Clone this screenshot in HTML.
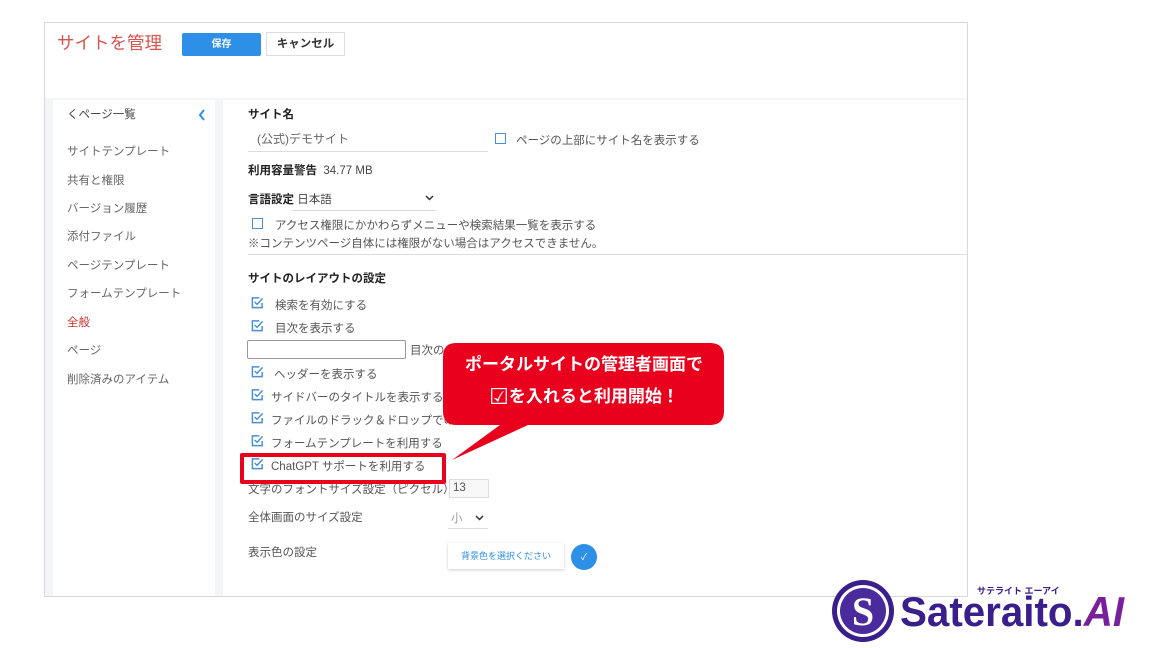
<!DOCTYPE html>
<html><head><meta charset="utf-8"><style>
*{margin:0;padding:0;box-sizing:border-box}
body{width:1149px;height:648px;background:#fff;position:relative;overflow:hidden;font-family:"Liberation Sans","Noto Sans CJK JP",sans-serif;color:#333}
.a{position:absolute;white-space:nowrap}
.frame{left:44px;top:22px;width:924px;height:575px;border:1px solid #d8d8d8;background:#f4f5f8}
.hdr{left:45px;top:23px;width:922px;height:75px;background:#fff}
.side{left:53px;top:100px;width:162px;height:496px;background:#fff}
.main{left:223px;top:100px;width:744px;height:496px;background:#fff}
.nav{left:67px;font-size:11.5px;color:#666}
.lbl{font-size:11.5px;color:#444}
.cb{width:11px;height:11px;border:1.5px solid #4a90d9}
.ck{font-size:11.5px;color:#555}
</style></head><body>
<svg width="0" height="0" style="position:absolute"><defs><symbol id="c" viewBox="0 0 14 14"><path d="M12 7.5V12.5H1.5V2H9" fill="none" stroke="#4a90d9" stroke-width="1.6"/><path d="M4 6.5L6.5 9L12.5 2.5" fill="none" stroke="#4a90d9" stroke-width="1.6"/></symbol></defs></svg>
<div class="a frame"></div>
<div class="a hdr"></div>
<div class="a" style="left:57px;top:30px;font-size:17.5px;color:#d9534f">サイトを管理</div>
<div class="a" style="left:182px;top:33px;width:79px;height:23px;background:#2d8fe6;border-radius:2px;color:#fff;font-size:10px;font-weight:bold;text-align:center;line-height:23px">保存</div>
<div class="a" style="left:266px;top:32px;width:79px;height:24px;border:1px solid #ddd;background:#fff;font-size:11.5px;font-weight:bold;text-align:center;line-height:22px;color:#333">キャンセル</div>
<div class="a side"></div>
<div class="a main"></div>
<div class="a nav" style="top:106px;color:#444">くページ一覧</div>
<svg class="a" style="left:198px;top:109px" width="8" height="12"><path d="M6 1L2 6L6 11" fill="none" stroke="#2d8fe6" stroke-width="2"/></svg>
<div class="a nav" style="top:143px">サイトテンプレート</div>
<div class="a nav" style="top:172px">共有と権限</div>
<div class="a nav" style="top:200px">バージョン履歴</div>
<div class="a nav" style="top:228px">添付ファイル</div>
<div class="a nav" style="top:257px">ページテンプレート</div>
<div class="a nav" style="top:285px">フォームテンプレート</div>
<div class="a nav" style="top:314px;color:#c9302c">全般</div>
<div class="a nav" style="top:342px">ページ</div>
<div class="a nav" style="top:371px">削除済みのアイテム</div>

<div class="a lbl" style="left:248px;top:106px;font-weight:bold;color:#222">サイト名</div>
<div class="a" style="left:257px;top:130px;font-size:12px;color:#666">(公式)デモサイト</div>
<div class="a" style="left:248px;top:151px;width:240px;height:1px;background:#ddd"></div>
<div class="a cb" style="left:495px;top:133px"></div>
<div class="a ck" style="left:516px;top:132px">ページの上部にサイト名を表示する</div>
<div class="a lbl" style="left:248px;top:162px"><b style="color:#222">利用容量警告</b>&nbsp; 34.77 MB</div>
<div class="a lbl" style="left:248px;top:191px"><b style="color:#222">言語設定</b> 日本語</div>
<svg class="a" style="left:425px;top:195px" width="9" height="6"><path d="M1 1L4.5 4.5L8 1" fill="none" stroke="#333" stroke-width="1.5"/></svg>
<div class="a" style="left:292px;top:210px;width:144px;height:1px;background:#ddd"></div>
<div class="a cb" style="left:252px;top:218px"></div>
<div class="a ck" style="left:275px;top:217px">アクセス権限にかかわらずメニューや検索結果一覧を表示する</div>
<div class="a ck" style="left:248px;top:235px">※コンテンツページ自体には権限がない場合はアクセスできません。</div>
<div class="a" style="left:248px;top:254px;width:719px;height:1px;background:#ddd"></div>
<div class="a lbl" style="left:248px;top:270px;font-weight:bold;color:#222">サイトのレイアウトの設定</div>

<svg class="a" style="left:251px;top:296px" width="13" height="13"><use href="#c"/></svg>
<div class="a ck" style="left:275px;top:297px">検索を有効にする</div>
<svg class="a" style="left:251px;top:319px" width="13" height="13"><use href="#c"/></svg>
<div class="a ck" style="left:275px;top:320px">目次を表示する</div>
<div class="a" style="left:247px;top:340px;width:159px;height:19px;border:1px solid #999;border-radius:2px"></div>
<div class="a ck" style="left:410px;top:342px">目次の</div>
<svg class="a" style="left:251px;top:365px" width="13" height="13"><use href="#c"/></svg>
<div class="a ck" style="left:274px;top:366px">ヘッダーを表示する</div>
<svg class="a" style="left:251px;top:388px" width="13" height="13"><use href="#c"/></svg>
<div class="a ck" style="left:271px;top:389px">サイドバーのタイトルを表示する</div>
<svg class="a" style="left:251px;top:411px" width="13" height="13"><use href="#c"/></svg>
<div class="a ck" style="left:271px;top:412px">ファイルのドラック＆ドロップでの</div>
<svg class="a" style="left:251px;top:434px" width="13" height="13"><use href="#c"/></svg>
<div class="a ck" style="left:271px;top:435px">フォームテンプレートを利用する</div>
<svg class="a" style="left:251px;top:457px" width="13" height="13"><use href="#c"/></svg>
<div class="a ck" style="left:271px;top:458px">ChatGPT サポートを利用する</div>
<div class="a ck" style="left:248px;top:481px">文字のフォントサイズ設定（ピクセル）</div>
<div class="a" style="left:449px;top:479px;width:40px;height:19px;border:1px solid #ddd;background:#f8f8f8;font-size:11.5px;color:#555;padding:2px 3px">13</div>
<div class="a ck" style="left:248px;top:509px">全体画面のサイズ設定</div>
<div class="a ck" style="left:451px;top:510px;color:#999">小</div>
<svg class="a" style="left:475px;top:515px" width="9" height="6"><path d="M1 1L4.5 4.5L8 1" fill="none" stroke="#333" stroke-width="1.5"/></svg>
<div class="a" style="left:448px;top:528px;width:40px;height:1px;background:#ddd"></div>
<div class="a ck" style="left:248px;top:544px">表示色の設定</div>
<div class="a" style="left:448px;top:543px;width:116px;height:26px;background:#fff;box-shadow:0 1px 3px rgba(0,0,0,.2);font-size:9px;color:#2d8fe6;text-align:center;line-height:26px">背景色を選択ください</div>
<div class="a" style="left:571px;top:544px;width:26px;height:26px;border-radius:50%;background:#2d8fe6;color:#fff;font-size:9px;text-align:center;line-height:26px">✓</div>

<div class="a" style="left:240px;top:453px;width:206px;height:31px;border:4px solid #e8001c;border-radius:2px"></div>
<svg class="a" style="left:440px;top:340px" width="290" height="130">
<path d="M16 3 H270 Q284 3 284 17 V71 Q284 85 270 85 H88 L12 120 L60 85 H16 Q3 85 3 71 V17 Q3 3 16 3 Z" fill="#e8001c"/>
</svg>
<div class="a" style="left:450px;top:349px;width:268px;text-align:center;color:#fff;font-weight:bold;font-size:17px;line-height:32px">ポータルサイトの管理者画面で<br><span style="font-size:22px;font-weight:normal;vertical-align:-2px">☑</span>を入れると利用開始！</div>

<svg class="a" style="left:830px;top:578px" width="66" height="66"><circle cx="33" cy="33" r="31" fill="#3a1f8c"/><circle cx="33" cy="33" r="26" fill="#fff"/><circle cx="33" cy="33" r="23" fill="#4a2a9c"/><text x="33" y="47" text-anchor="middle" font-family="Liberation Serif" font-weight="bold" font-size="40" fill="#fff">S</text></svg>
<div class="a" style="left:977px;top:584px;font-size:9px;font-weight:bold;color:#3a1f8c">サテライト エーアイ</div>
<div class="a" style="left:900px;top:588px;font-size:42px;font-weight:bold;color:#3a1f8c;letter-spacing:0;transform:scaleX(0.96);transform-origin:left">Sateraito.<span style="color:#7a1f9c;font-style:italic">AI</span></div>
</body></html>
